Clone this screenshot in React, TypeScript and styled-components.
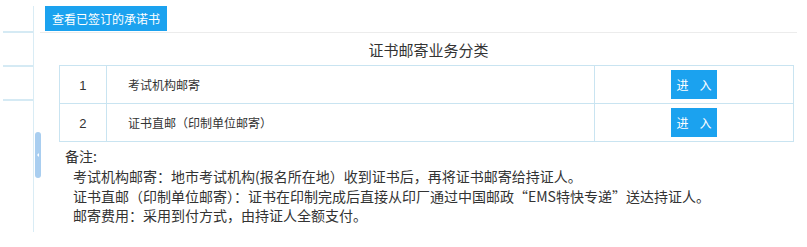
import React from "react";
import styled, { createGlobalStyle } from "styled-components";

const Global = createGlobalStyle`
  html, body { margin: 0; padding: 0; background: #fff; }
  body { font-family: "Microsoft YaHei", "Noto Sans CJK SC", "Noto Sans", sans-serif; color: #333; }
`;

const Page = styled.div`
  display: flex;
  width: 807px;
  height: 247px;
  overflow: hidden;
`;

const Sidebar = styled.div`
  position: relative;
  width: 34px;
  margin-top: 6px;
  height: 226px;
  border-right: 1px solid #d9ecf5;
  box-sizing: border-box;
  display: flex;
  flex-direction: column;
  padding-left: 3px;
`;

const SideItem = styled.div<{ $h: number }>`
  height: ${(p) => p.$h}px;
  border-bottom: 2px solid #d5eaf4;
  box-sizing: border-box;
`;

const Handle = styled.div`
  position: absolute;
  left: 35px;
  top: 126px;
  width: 6px;
  height: 46px;
  border-radius: 3px;
  background: #a9cef0;
  display: flex;
  align-items: center;
  justify-content: center;
  &::after {
    content: "";
    width: 0;
    height: 0;
    border-top: 2px solid transparent;
    border-bottom: 2px solid transparent;
    border-right: 2px solid #fff;
  }
`;

const Main = styled.div`
  flex: 1;
  padding-left: 6px;
  padding-right: 10px;
  display: flex;
  flex-direction: column;
`;

const Toolbar = styled.div`
  padding-top: 6px;
  padding-left: 5px;
  border-bottom: 1px solid #ececec;
  display: flex;
`;

const TopButton = styled.div`
  height: 25px;
  padding: 0 7px;
  background: #1ba2ef;
  color: #fff;
  font-size: 12px;
  line-height: 25px;
  margin-bottom: 1px;
`;

const Title = styled.div`
  text-align: center;
  font-size: 15px;
  line-height: 20px;
  margin-top: 7px;
  margin-bottom: 5px;
  padding-left: 20px;
  color: #333;
`;

const Table = styled.table`
  margin-left: 19px;
  width: 735px;
  border-collapse: collapse;
  font-size: 12px;
  color: #333;
`;

const Cell = styled.td<{ $w: number; $align: string; $pl?: number }>`
  width: ${(p) => p.$w}px;
  height: 38px;
  border: 1px solid #c9e4f1;
  text-align: ${(p) => p.$align};
  padding: 0 0 0 ${(p) => p.$pl ?? 0}px;
  box-sizing: border-box;
  vertical-align: middle;
`;

const Num = styled.span`
  font-family: "Liberation Sans", "Noto Sans", sans-serif;
  font-size: 13px;
`;

const EnterButton = styled.span`
  display: inline-flex;
  align-items: center;
  justify-content: center;
  gap: 11px;
  width: 46px;
  height: 29px;
  background: #1ba2ef;
  color: #fff;
  font-size: 12px;
  vertical-align: middle;
`;

const Notes = styled.div`
  margin-left: 25px;
  margin-top: 3px;
  font-size: 14px;
  color: #333;
`;

const NoteHead = styled.div`
  line-height: 22px;
`;

const NoteLine = styled.div`
  padding-left: 8px;
  line-height: 19.5px;
`;

const rows = [
  { n: "1", name: "考试机构邮寄" },
  { n: "2", name: "证书直邮（印制单位邮寄）" },
];

export default function App() {
  return (
    <Page>
      <Global />
      <Sidebar>
        <SideItem $h={27} />
        <SideItem $h={34} />
        <SideItem $h={34} />
        <Handle />
      </Sidebar>
      <Main>
        <Toolbar>
          <TopButton>查看已签订的承诺书</TopButton>
        </Toolbar>
        <Title>证书邮寄业务分类</Title>
        <Table>
          <tbody>
            {rows.map((r) => (
              <tr key={r.n}>
                <Cell $w={47} $align="center">
                  <Num>{r.n}</Num>
                </Cell>
                <Cell $w={489} $align="left" $pl={21}>
                  {r.name}
                </Cell>
                <Cell $w={199} $align="center">
                  <EnterButton>
                    <span>进</span>
                    <span>入</span>
                  </EnterButton>
                </Cell>
              </tr>
            ))}
          </tbody>
        </Table>
        <Notes>
          <NoteHead>备注:</NoteHead>
          <NoteLine>考试机构邮寄：地市考试机构(报名所在地）收到证书后，再将证书邮寄给持证人。</NoteLine>
          <NoteLine>证书直邮（印制单位邮寄）：证书在印制完成后直接从印厂通过中国邮政“EMS特快专递”送达持证人。</NoteLine>
          <NoteLine>邮寄费用：采用到付方式，由持证人全额支付。</NoteLine>
        </Notes>
      </Main>
    </Page>
  );
}
